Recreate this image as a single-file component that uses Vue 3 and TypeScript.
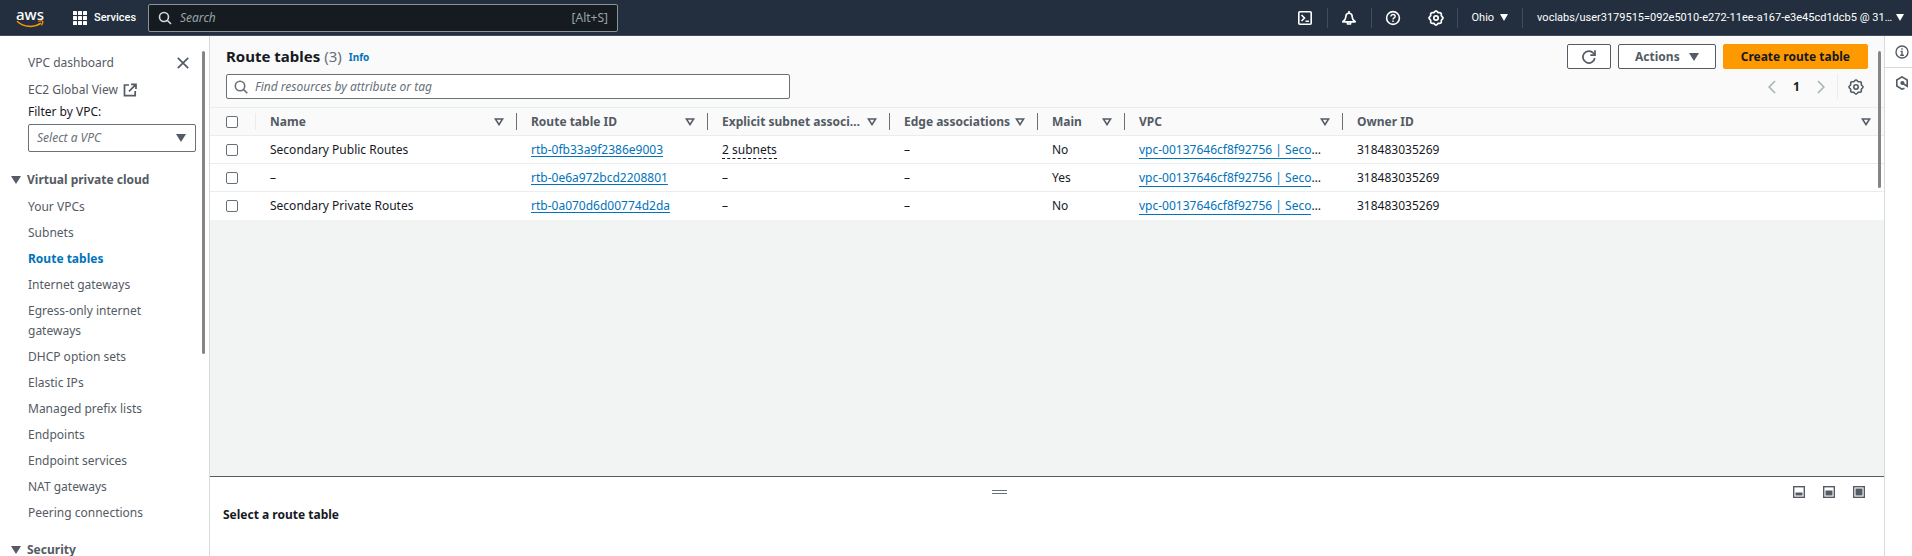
<script setup lang="ts">
import { ref } from 'vue'

interface RouteTable {
  name: string
  id: string
  subnets: string
  edge: string
  main: string
  vpc: string
  owner: string
}

const columns: { key: string; label: string }[] = [
  { key: 'name', label: 'Name' },
  { key: 'id', label: 'Route table ID' },
  { key: 'subnets', label: 'Explicit subnet associ…' },
  { key: 'edge', label: 'Edge associations' },
  { key: 'main', label: 'Main' },
  { key: 'vpc', label: 'VPC' },
  { key: 'owner', label: 'Owner ID' },
]

const vpc = 'vpc-00137646cf8f92756 | Seco'
const rows: RouteTable[] = [
  { name: 'Secondary Public Routes', id: 'rtb-0fb33a9f2386e9003', subnets: '2 subnets', edge: '–', main: 'No', vpc, owner: '318483035269' },
  { name: '–', id: 'rtb-0e6a972bcd2208801', subnets: '–', edge: '–', main: 'Yes', vpc, owner: '318483035269' },
  { name: 'Secondary Private Routes', id: 'rtb-0a070d6d00774d2da', subnets: '–', edge: '–', main: 'No', vpc, owner: '318483035269' },
]

const vpcLinks: string[] = [
  'Your VPCs', 'Subnets', 'Route tables', 'Internet gateways', 'Egress-only internet gateways',
  'DHCP option sets', 'Elastic IPs', 'Managed prefix lists', 'Endpoints', 'Endpoint services',
  'NAT gateways', 'Peering connections',
]

const gridDots = [0, 5, 10]
const search = ref('')
const filter = ref('')
const selectedVpc = ref('')
const selected = ref<string[]>([])

const gear = Array.from({ length: 64 }, (_, i) => {
  const a = (i / 64) * Math.PI * 2
  const r = 6.4 + 0.6 * Math.cos(a * 8)
  return `${(8 + r * Math.cos(a)).toFixed(2)},${(8 + r * Math.sin(a)).toFixed(2)}`
}).join(' ')
</script>

<template>
  <div class="page">
    <header class="topbar">
      <a href="#" class="logo" aria-label="AWS home">
        <span class="logo-text">aws</span>
        <svg class="smile" width="28" height="8" viewBox="0 0 28 8" fill="none" stroke="#ff9900" stroke-width="1.5">
          <path d="M1 1.2C8 7.4 18 8 25 3.2" />
          <path d="M22 1.3c2-.6 4-.7 4.6-.1.5.7-.1 2.6-1.2 4.2" stroke-width="1.2" />
        </svg>
      </a>
      <button class="services">
        <svg width="14" height="14" viewBox="0 0 14 14" fill="#fff">
          <template v-for="y in gridDots" :key="y">
            <rect v-for="x in gridDots" :key="x" :x="x" :y="y" width="4" height="4" rx="0.5" />
          </template>
        </svg>
        Services
      </button>
      <label class="global-search">
        <svg width="14" height="14" viewBox="0 0 14 14" fill="none" stroke="#d5dbdb" stroke-width="1.6">
          <circle cx="6" cy="6" r="4.5" /><path d="M9.2 9.2L13 13" />
        </svg>
        <input v-model="search" type="text" placeholder="Search" aria-label="Search" />
        <span>[Alt+S]</span>
      </label>
      <nav class="tools">
        <button class="tool" aria-label="CloudShell">
          <svg width="16" height="16" viewBox="0 0 16 16" fill="none" stroke="#fff" stroke-width="1.6">
            <rect x="1.8" y="1.8" width="12.4" height="12.4" rx="1" /><path d="M4.5 5l3 3-3 3M8.5 11.3h3.5" />
          </svg>
        </button>
        <button class="tool" aria-label="Notifications">
          <svg width="16" height="16" viewBox="0 0 16 16" fill="none" stroke="#fff" stroke-width="1.7" stroke-linejoin="round">
            <path d="M8 1v2M4.8 7c0-5 6.4-5 6.4 0 0 2.3 1 3.3 3 4.8H1.8c2-1.5 3-2.5 3-4.8z" /><path d="M6.5 12v2h3v-2" />
          </svg>
        </button>
        <button class="tool" aria-label="Help">
          <svg width="16" height="16" viewBox="0 0 16 16" fill="none" stroke="#fff" stroke-width="1.6">
            <circle cx="8" cy="8" r="6.4" /><path d="M5.9 6.6c0-3 4.3-2.7 4.3-.2C10.2 8 8 7.9 8 9.5M8 10.6v1.4" stroke-width="1.4" />
          </svg>
        </button>
        <button class="tool plain" aria-label="Settings">
          <svg width="16" height="16" viewBox="0 0 16 16" fill="none" stroke="#fff" stroke-width="1.7">
            <polygon :points="gear" /><circle cx="8" cy="8" r="2.2" />
          </svg>
        </button>
        <button class="menu">Ohio <svg width="8" height="7" viewBox="0 0 8 7"><path d="M0 0h8L4 7z" fill="#fff" /></svg></button>
        <button class="menu account">voclabs/user3179515=092e5010-e272-11ee-a167-e3e45cd1dcb5 @ 31… <svg width="8" height="7" viewBox="0 0 8 7"><path d="M0 0h8L4 7z" fill="#fff" /></svg></button>
      </nav>
    </header>

    <div class="body">
      <aside class="sidebar">
        <div class="side-head">
          <a href="#">VPC dashboard</a>
          <button aria-label="Close navigation">
            <svg width="12" height="12" viewBox="0 0 12 12" stroke="#545b64" stroke-width="1.7"><path d="M.8.8l10.4 10.4M11.2.8L.8 11.2" /></svg>
          </button>
        </div>
        <a href="#" class="global-view">EC2 Global View
          <svg width="14" height="14" viewBox="0 0 14 14" fill="none" stroke="#545b64" stroke-width="1.7"><path d="M6 2H1.5v10.7h10.7V8M8 1.3h5V6M12.7 1.6L6 8.3" /></svg>
        </a>
        <label class="filter-label" for="vpc-filter">Filter by VPC:</label>
        <div class="select">
          <select id="vpc-filter" v-model="selectedVpc"><option value="">Select a VPC</option></select>
          <svg width="10" height="8" viewBox="0 0 10 8"><path d="M0 0h10L5 8z" fill="#545b64" /></svg>
        </div>
        <button class="section"><svg width="10" height="8" viewBox="0 0 10 8"><path d="M0 0h10L5 8z" fill="#545b64" /></svg>Virtual private cloud</button>
        <ul>
          <li v-for="link in vpcLinks" :key="link"><a href="#" :class="{ current: link === 'Route tables' }">{{ link }}</a></li>
        </ul>
        <button class="section security"><svg width="10" height="8" viewBox="0 0 10 8"><path d="M0 0h10L5 8z" fill="#545b64" /></svg>Security</button>
        <div class="scroll"></div>
      </aside>

      <main class="main">
        <section class="tables">
          <div class="toolbar">
            <div class="title-row">
              <h1>Route tables <span>(3)</span></h1>
              <a href="#" class="info">Info</a>
              <div class="actions">
                <button class="btn refresh" aria-label="Refresh">
                  <svg width="16" height="16" viewBox="0 0 16 16" fill="none" stroke="#545b64" stroke-width="1.7"><path d="M13.8 9A6 6 0 1 1 12.5 4.2L13.9 5.8" /><path d="M14 1.3v4.8H9.3" /></svg>
                </button>
                <button class="btn">Actions <svg width="10" height="8" viewBox="0 0 10 8"><path d="M0 0h10L5 8z" fill="#545b64" /></svg></button>
                <button class="btn primary">Create route table</button>
              </div>
            </div>
            <div class="filter-row">
              <label class="filter">
                <svg width="14" height="14" viewBox="0 0 14 14" fill="none" stroke="#687078" stroke-width="1.6"><circle cx="6" cy="6" r="4.7" /><path d="M9.4 9.4L13.3 13.3" /></svg>
                <input v-model="filter" type="text" placeholder="Find resources by attribute or tag" aria-label="Find resources" />
              </label>
              <div class="pager">
                <button aria-label="Previous page"><svg width="8" height="14" viewBox="0 0 8 14" fill="none" stroke="#aab7b8" stroke-width="1.7"><path d="M7 1L1.2 7 7 13" /></svg></button>
                <button class="page-number">1</button>
                <button aria-label="Next page"><svg width="8" height="14" viewBox="0 0 8 14" fill="none" stroke="#aab7b8" stroke-width="1.7"><path d="M1 1l5.8 6L1 13" /></svg></button>
                <button class="prefs" aria-label="Preferences">
                  <svg width="16" height="16" viewBox="0 0 16 16" fill="none" stroke="#545b64" stroke-width="1.6"><polygon :points="gear" /><circle cx="8" cy="8" r="2.2" /></svg>
                </button>
              </div>
            </div>
          </div>

          <table>
            <colgroup>
              <col class="c-check" /><col v-for="c in columns" :key="c.key" :class="'c-' + c.key" />
            </colgroup>
            <thead>
              <tr>
                <th><input type="checkbox" aria-label="Select all route tables" /></th>
                <th v-for="c in columns" :key="c.key">
                  <div class="head-cell"><span>{{ c.label }}</span>
                    <svg width="10" height="8" viewBox="0 0 10 8" fill="none" stroke="#545b64" stroke-width="1.6"><path d="M1.4 1h7.2L5 6.6z" /></svg>
                  </div>
                </th>
              </tr>
            </thead>
            <tbody>
              <tr v-for="row in rows" :key="row.id">
                <td><input v-model="selected" type="checkbox" :value="row.id" :aria-label="'Select ' + row.id" /></td>
                <td>{{ row.name }}</td>
                <td><a href="#">{{ row.id }}</a></td>
                <td><span :class="{ dotted: row.subnets !== '–' }">{{ row.subnets }}</span></td>
                <td>{{ row.edge }}</td>
                <td>{{ row.main }}</td>
                <td class="vpc"><a href="#">{{ row.vpc }}</a>…</td>
                <td>{{ row.owner }}</td>
              </tr>
            </tbody>
          </table>
          <div class="scroll main-scroll"></div>
        </section>

        <section class="split">
          <div class="split-bar">
            <div class="grip"><button class="handle" aria-label="Resize panel"></button></div>
            <div class="sizes">
              <button v-for="h in [3, 5, 7]" :key="h" :aria-label="'Panel size ' + h">
                <svg width="12" height="12" viewBox="0 0 12 12"><rect x="0.7" y="0.7" width="10.6" height="10.6" fill="#fff" stroke="#545b64" stroke-width="1.4" /><rect x="2.5" :y="9.5 - h" width="7" :height="h" fill="#545b64" /></svg>
              </button>
            </div>
          </div>
          <h2>Select a route table</h2>
        </section>
      </main>

      <aside class="rail">
        <button aria-label="Info panel">
          <svg width="14" height="14" viewBox="0 0 14 14" fill="none" stroke="#545b64" stroke-width="1.4"><circle cx="7" cy="7" r="6" /><path d="M7 3.2v1.5M5.5 6.4H7v3.8M5.2 10.3h3.7" /></svg>
        </button>
        <button aria-label="Tutorials">
          <svg width="14" height="14" viewBox="0 0 14 14" fill="none" stroke="#545b64" stroke-width="1.6"><path d="M9.5 12.2L7 13.2 1.8 10V4L7 .9 12.2 4v6.2L7.5 7.3" /><circle cx="7.4" cy="7" r="1.3" fill="#545b64" /></svg>
        </button>
      </aside>
    </div>
  </div>
</template>

<style>
html, body { margin: 0; background: #fff; }
</style>

<style scoped>
.page {
  height: 100vh;
  display: flex;
  flex-direction: column;
  overflow: hidden;
  font-family: "Noto Sans", "Open Sans", sans-serif;
  font-size: 12px;
  line-height: 20px;
  color: #16191f;
}
*, *::before { box-sizing: border-box; }
button, input, select { font: inherit; color: inherit; margin: 0; padding: 0; }
button { border: 0; background: none; display: flex; align-items: center; }
input[type="text"] { border: 0; background: none; outline: 0; min-width: 0; flex: 1; }
a { color: #0073bb; text-decoration: none; }
svg { flex: none; }

.topbar {
  flex: none;
  height: 36px;
  display: flex;
  align-items: center;
  background: #232f3e;
  border-bottom: 1px solid #414d5c;
  color: #fff;
  padding-left: 16px;
  font-size: 11px;
}
.logo { width: 57px; display: flex; flex-direction: column; }
.logo-text { color: #fff; font-size: 15px; line-height: 12px; font-weight: 500; }
.services { gap: 7px; width: 75px; font-family: Roboto, sans-serif; font-weight: 500; }
.global-search {
  width: 470px;
  height: 28px;
  display: flex;
  align-items: center;
  gap: 8px;
  padding: 0 9px;
  background: #161b22;
  border: 1px solid #879596;
  border-radius: 2px;
  font-size: 12px;
  color: #95a5a6;
}
.global-search input::placeholder { color: #95a5a6; font-style: italic; opacity: 1; }
.tools { margin-left: auto; display: flex; align-items: center; }
.tool, .menu { height: 20px; border-left: 1px solid #414d5c; justify-content: center; }
.tool { width: 44px; }
.tool:first-child { border-left: 0; }
.tool.plain { border-left: 0; width: 42px; }
.menu { gap: 6px; padding: 0 14px; font-family: Roboto, sans-serif; }
.account { padding: 0 8px 0 14px; gap: 4px; }

.body { flex: 1; min-height: 0; display: flex; }
.sidebar {
  position: relative;
  flex: none;
  width: 210px;
  overflow: hidden;
  border-right: 1px solid #d5dbdb;
  padding: 17px 13px 0 28px;
  color: #545b64;
}
.sidebar a { color: #545b64; }
.side-head { display: flex; justify-content: space-between; padding-right: 7px; margin-bottom: 7px; }
.global-view { display: flex; align-items: center; gap: 5px; }
.filter-label { display: block; color: #16191f; margin: 2px 0 2px; }
.select { display: flex; align-items: center; position: relative; }
.select select {
  appearance: none;
  width: 100%;
  height: 28px;
  padding: 0 8px;
  border: 1px solid #687078;
  border-radius: 2px;
  background: #fff;
  font-style: italic;
  color: #687078;
}
.select svg { position: absolute; right: 10px; pointer-events: none; }
.section { gap: 6px; margin: 20px 0 0 -17px; line-height: 16px; font-weight: 700; }
.sidebar ul { list-style: none; margin: 6px 0 0; padding: 0; }
.sidebar li { padding: 3px 30px 3px 0; }
.sidebar li a { display: block; }
.sidebar li .current { color: #0073bb; font-weight: 700; }
.section.security { margin-top: 16px; }
.scroll { position: absolute; right: 4px; top: 15px; width: 3px; height: 303px; background: #858585; border-radius: 2px; }

.main { flex: 1; min-width: 0; display: flex; flex-direction: column; background: #f2f3f3; }
.tables { flex: 1; position: relative; }
.toolbar { background: #fafafa; padding: 8px 16px 8px; }
.title-row { display: flex; align-items: center; height: 25px; }
h1 { margin: 0; padding-bottom: 2px; font-size: 15px; font-weight: 700; }
h1 span { color: #687078; font-weight: 400; }
.info { font-size: 10px; font-weight: 700; margin-left: 7px; }
.actions { margin-left: auto; display: flex; gap: 7px; }
.btn { height: 25px; padding: 0 16px; gap: 9px; border: 1px solid #545b64; border-radius: 2px; background: #fff; color: #545b64; font-weight: 700; }
.refresh { padding: 0 13px; }
.primary { padding: 0 17px; background: #ff9900; border-color: #ff9900; color: #16191f; }
.filter-row { display: flex; justify-content: space-between; margin-top: 5px; }
.filter { width: 564px; height: 25px; display: flex; align-items: center; gap: 7px; padding: 0 7px; background: #fff; border: 1px solid #687078; border-radius: 2px; }
.filter input::placeholder { color: #687078; font-style: italic; opacity: 1; }
.pager { display: flex; align-items: center; }
.page-number { width: 41px; justify-content: center; font-weight: 700; }
.prefs { height: 25px; margin-left: 12px; padding: 0 4px 0 10px; border-left: 1px solid #eaeded; }

table { width: 100%; table-layout: fixed; border-collapse: collapse; background: #fff; }
.c-check { width: 46px; }
.c-name { width: 261px; }
.c-id { width: 191px; }
.c-subnets { width: 182px; }
.c-edge { width: 148px; }
.c-main { width: 87px; }
.c-vpc { width: 218px; }
th, td { height: 28px; padding: 0 0 0 14px; text-align: left; white-space: nowrap; border-top: 1px solid #eaeded; }
th { position: relative; background: #fafafa; color: #545b64; font-weight: 700; }
th:first-child, td:first-child { padding-left: 16px; }
th::after { content: ""; position: absolute; right: 0; top: 5px; width: 1px; height: 17px; background: #687078; }
th:first-child::after { background: #eaeded; }
th:last-child::after { display: none; }
.head-cell { display: flex; align-items: center; justify-content: space-between; padding-right: 13px; }
td a { text-decoration: underline; text-underline-offset: 2px; }
td.vpc a { text-decoration: none; border-bottom: 1px solid #0073bb; }
.dotted { border-bottom: 1px dashed #16191f; }
input[type="checkbox"] { appearance: none; display: block; width: 12px; height: 12px; border: 1px solid #687078; border-radius: 2px; background: #fff; }
.main-scroll { height: 137px; right: 3px; }

.split { flex: none; background: #fff; border-top: 1px solid #545b64; padding: 9px 19px 31px 13px; }
.split-bar { display: flex; align-items: center; height: 12px; }
.grip { flex: 1; display: flex; justify-content: center; }
.handle { width: 15px; height: 4px; border: solid #687078; border-width: 1px 0; }
.sizes { display: flex; gap: 18px; padding-left: 18px; }
h2 { margin: 7px 0 0; font-size: 12px; font-weight: 700; }

.rail { flex: none; width: 28px; border-left: 1px solid #d5dbdb; }
.rail button { width: 100%; height: 31px; justify-content: flex-end; padding-right: 3px; }
.rail button + button { border-top: 1px solid #d5dbdb; }
</style>
